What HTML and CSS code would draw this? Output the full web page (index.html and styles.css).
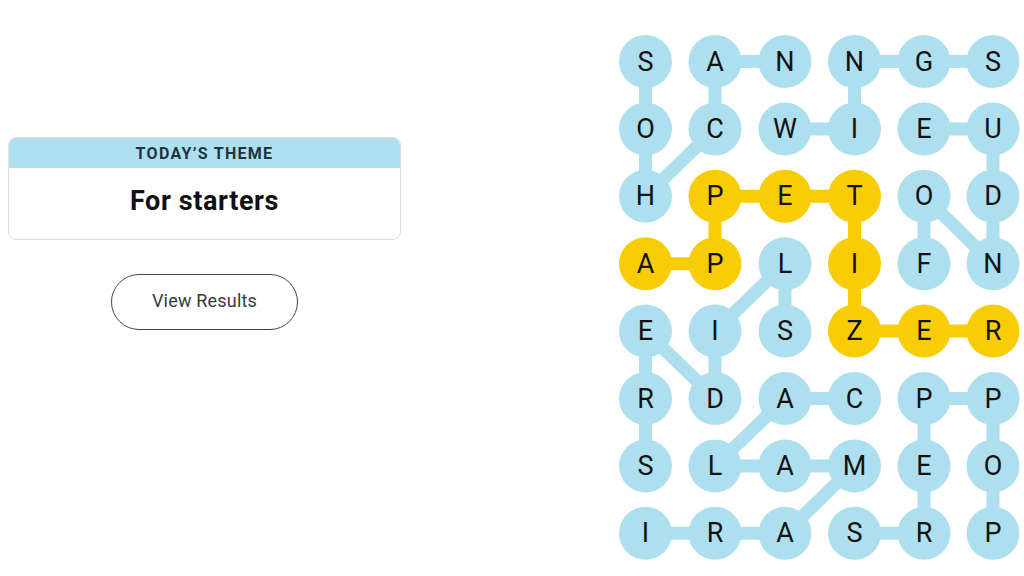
FILE: index.html
```html
<!DOCTYPE html>
<html>
<head>
<meta charset="utf-8">
<link rel="stylesheet" href="styles.css">
</head>
<body>
<div class="page">
  <section class="side">
    <div class="theme-card">
      <div class="theme-head">TODAY’S THEME</div>
      <div class="theme-body">For starters</div>
    </div>
    <button class="results-btn">View Results</button>
  </section>
  <section class="board">
    <svg class="board-svg" width="424" height="576" viewBox="600 0 424 576">
      <g class="links-blue">
        <!-- NACHOS -->
        <line x1="785" y1="61.5" x2="715" y2="61.5"/>
        <line x1="715" y1="61.5" x2="715" y2="128.9"/>
        <line x1="715" y1="128.9" x2="645.5" y2="196.3"/>
        <line x1="645.5" y1="196.3" x2="645.5" y2="128.9"/>
        <line x1="645.5" y1="128.9" x2="645.5" y2="61.5"/>
        <!-- WINGS -->
        <line x1="785" y1="128.9" x2="854.5" y2="128.9"/>
        <line x1="854.5" y1="128.9" x2="854.5" y2="61.5"/>
        <line x1="854.5" y1="61.5" x2="993" y2="61.5"/>
        <!-- FONDUE -->
        <line x1="924" y1="263.7" x2="924" y2="196.3"/>
        <line x1="924" y1="196.3" x2="993" y2="263.7"/>
        <line x1="993" y1="263.7" x2="993" y2="128.9"/>
        <line x1="993" y1="128.9" x2="924" y2="128.9"/>
        <!-- SLIDERS -->
        <line x1="785" y1="331.1" x2="785" y2="263.7"/>
        <line x1="785" y1="263.7" x2="715" y2="331.1"/>
        <line x1="715" y1="331.1" x2="715" y2="398.5"/>
        <line x1="715" y1="398.5" x2="645.5" y2="331.1"/>
        <line x1="645.5" y1="331.1" x2="645.5" y2="465.9"/>
        <!-- CALAMARI -->
        <line x1="854.5" y1="398.5" x2="785" y2="398.5"/>
        <line x1="785" y1="398.5" x2="715" y2="465.9"/>
        <line x1="715" y1="465.9" x2="854.5" y2="465.9"/>
        <line x1="854.5" y1="465.9" x2="785" y2="533.3"/>
        <line x1="785" y1="533.3" x2="645.5" y2="533.3"/>
        <!-- POPPERS -->
        <line x1="993" y1="533.3" x2="993" y2="398.5"/>
        <line x1="993" y1="398.5" x2="924" y2="398.5"/>
        <line x1="924" y1="398.5" x2="924" y2="533.3"/>
        <line x1="924" y1="533.3" x2="854.5" y2="533.3"/>
      </g>
      <g class="links-gold">
        <line x1="645.5" y1="263.7" x2="715" y2="263.7"/>
        <line x1="715" y1="263.7" x2="715" y2="196.3"/>
        <line x1="715" y1="196.3" x2="854.5" y2="196.3"/>
        <line x1="854.5" y1="196.3" x2="854.5" y2="331.1"/>
        <line x1="854.5" y1="331.1" x2="993" y2="331.1"/>
      </g>
      <g class="dots">
        <circle cx="645.5" cy="61.5" r="26.5"/><circle cx="715" cy="61.5" r="26.5"/><circle cx="785" cy="61.5" r="26.5"/><circle cx="854.5" cy="61.5" r="26.5"/><circle cx="924" cy="61.5" r="26.5"/><circle cx="993" cy="61.5" r="26.5"/>
        <circle cx="645.5" cy="128.9" r="26.5"/><circle cx="715" cy="128.9" r="26.5"/><circle cx="785" cy="128.9" r="26.5"/><circle cx="854.5" cy="128.9" r="26.5"/><circle cx="924" cy="128.9" r="26.5"/><circle cx="993" cy="128.9" r="26.5"/>
        <circle cx="645.5" cy="196.3" r="26.5"/><circle class="gold" cx="715" cy="196.3" r="26.5"/><circle class="gold" cx="785" cy="196.3" r="26.5"/><circle class="gold" cx="854.5" cy="196.3" r="26.5"/><circle cx="924" cy="196.3" r="26.5"/><circle cx="993" cy="196.3" r="26.5"/>
        <circle class="gold" cx="645.5" cy="263.7" r="26.5"/><circle class="gold" cx="715" cy="263.7" r="26.5"/><circle cx="785" cy="263.7" r="26.5"/><circle class="gold" cx="854.5" cy="263.7" r="26.5"/><circle cx="924" cy="263.7" r="26.5"/><circle cx="993" cy="263.7" r="26.5"/>
        <circle cx="645.5" cy="331.1" r="26.5"/><circle cx="715" cy="331.1" r="26.5"/><circle cx="785" cy="331.1" r="26.5"/><circle class="gold" cx="854.5" cy="331.1" r="26.5"/><circle class="gold" cx="924" cy="331.1" r="26.5"/><circle class="gold" cx="993" cy="331.1" r="26.5"/>
        <circle cx="645.5" cy="398.5" r="26.5"/><circle cx="715" cy="398.5" r="26.5"/><circle cx="785" cy="398.5" r="26.5"/><circle cx="854.5" cy="398.5" r="26.5"/><circle cx="924" cy="398.5" r="26.5"/><circle cx="993" cy="398.5" r="26.5"/>
        <circle cx="645.5" cy="465.9" r="26.5"/><circle cx="715" cy="465.9" r="26.5"/><circle cx="785" cy="465.9" r="26.5"/><circle cx="854.5" cy="465.9" r="26.5"/><circle cx="924" cy="465.9" r="26.5"/><circle cx="993" cy="465.9" r="26.5"/>
        <circle cx="645.5" cy="533.3" r="26.5"/><circle cx="715" cy="533.3" r="26.5"/><circle cx="785" cy="533.3" r="26.5"/><circle cx="854.5" cy="533.3" r="26.5"/><circle cx="924" cy="533.3" r="26.5"/><circle cx="993" cy="533.3" r="26.5"/>
      </g>
      <g class="letters">
        <text x="645.5" y="61.5">S</text><text x="715" y="61.5">A</text><text x="785" y="61.5">N</text><text x="854.5" y="61.5">N</text><text x="924" y="61.5">G</text><text x="993" y="61.5">S</text>
        <text x="645.5" y="128.9">O</text><text x="715" y="128.9">C</text><text x="785" y="128.9">W</text><text x="854.5" y="128.9">I</text><text x="924" y="128.9">E</text><text x="993" y="128.9">U</text>
        <text x="645.5" y="196.3">H</text><text x="715" y="196.3">P</text><text x="785" y="196.3">E</text><text x="854.5" y="196.3">T</text><text x="924" y="196.3">O</text><text x="993" y="196.3">D</text>
        <text x="645.5" y="263.7">A</text><text x="715" y="263.7">P</text><text x="785" y="263.7">L</text><text x="854.5" y="263.7">I</text><text x="924" y="263.7">F</text><text x="993" y="263.7">N</text>
        <text x="645.5" y="331.1">E</text><text x="715" y="331.1">I</text><text x="785" y="331.1">S</text><text x="854.5" y="331.1">Z</text><text x="924" y="331.1">E</text><text x="993" y="331.1">R</text>
        <text x="645.5" y="398.5">R</text><text x="715" y="398.5">D</text><text x="785" y="398.5">A</text><text x="854.5" y="398.5">C</text><text x="924" y="398.5">P</text><text x="993" y="398.5">P</text>
        <text x="645.5" y="465.9">S</text><text x="715" y="465.9">L</text><text x="785" y="465.9">A</text><text x="854.5" y="465.9">M</text><text x="924" y="465.9">E</text><text x="993" y="465.9">O</text>
        <text x="645.5" y="533.3">I</text><text x="715" y="533.3">R</text><text x="785" y="533.3">A</text><text x="854.5" y="533.3">S</text><text x="924" y="533.3">R</text><text x="993" y="533.3">P</text>
      </g>
    </svg>
  </section>
</div>
</body>
</html>
```
FILE: styles.css
```css
html, body {
  margin: 0;
  padding: 0;
  background: #ffffff;
}
body {
  width: 1024px;
  height: 576px;
  overflow: hidden;
  font-family: "Roboto", "Liberation Sans", sans-serif;
}
.page {
  display: flex;
  width: 1024px;
  height: 576px;
}
.side {
  width: 600px;
  display: flex;
  flex-direction: column;
  align-items: flex-start;
  padding: 137px 0 0 8px;
  box-sizing: border-box;
}
.theme-card {
  width: 393px;
  box-sizing: border-box;
  border: 1px solid #dedede;
  border-radius: 8px;
  overflow: hidden;
  background: #fff;
}
.theme-head {
  height: 30px;
  background: #aedfee;
  color: #1d3340;
  font-size: 16px;
  font-weight: 700;
  letter-spacing: 1.3px;
  display: flex;
  align-items: center;
  justify-content: center;
  padding-top: 1px;
  box-sizing: border-box;
}
.theme-body {
  height: 71px;
  display: flex;
  align-items: center;
  justify-content: center;
  padding-bottom: 6px;
  box-sizing: border-box;
  font-size: 27px;
  font-weight: 700;
  color: #111;
  letter-spacing: 0.6px;
}
.results-btn {
  margin: 34px 0 0 103px;
  width: 187px;
  height: 56px;
  border: 1.5px solid #444;
  border-radius: 28px;
  background: #fff;
  font-family: "Roboto", "Liberation Sans", sans-serif;
  font-size: 18px;
  color: #3a3a3a;
  padding: 0 0 3px 0;
  letter-spacing: 0.2px;
}
.board {
  width: 424px;
  height: 576px;
}
.board-svg {
  display: block;
}
.links-blue line {
  stroke: #aedfee;
  stroke-width: 13;
  stroke-linecap: round;
}
.links-gold line {
  stroke: #f8cd05;
  stroke-width: 13;
  stroke-linecap: round;
}
.dots circle {
  fill: #aedfee;
}
.dots circle.gold {
  fill: #f8cd05;
}
.letters text {
  font-family: "Roboto", "Liberation Sans", sans-serif;
  font-size: 27px;
  fill: #121212;
  text-anchor: middle;
  dominant-baseline: central;
}
```
